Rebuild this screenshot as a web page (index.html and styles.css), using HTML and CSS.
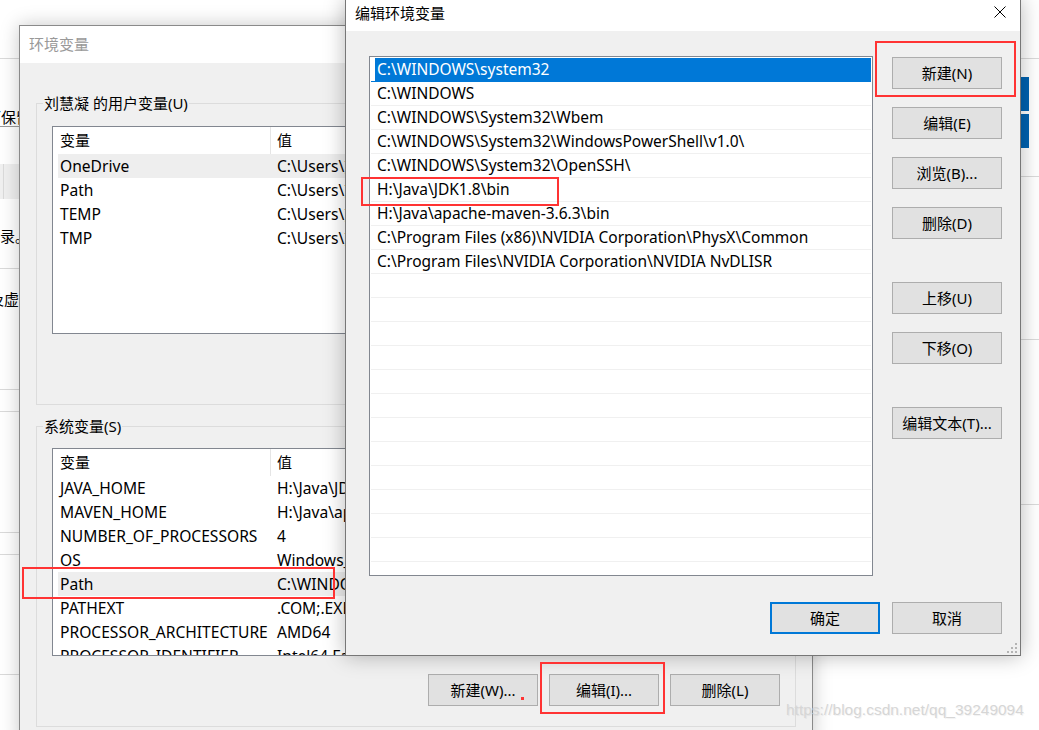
FILE: index.html
```html
<!DOCTYPE html>
<html lang="zh-CN">
<head>
<meta charset="utf-8">
<title>编辑环境变量</title>
<link rel="stylesheet" href="styles.css">
</head>
<body>
<div class="desktop">

  <!-- background window (system properties) -->
  <div class="bg">
    <div class="bg-head"></div>
    <div class="bg-main">
      <div class="bg-left">
        <div class="bl-keep"><span>可保留设置</span></div>
        <div class="bl-tab"><span></span></div>
        <p class="bl-text bl-dir">目录。</p>
        <div class="bl-rule r1"></div>
        <p class="bl-text bl-virt">及虚拟</p>
        <div class="bl-rule r2"></div>
        <div class="bl-rule r3"></div>
        <div class="bl-rule r4"></div>
        <div class="bl-rule r3"></div>
        <div class="bl-rule r5"></div>
      </div>
      <div class="bg-right">
        <div class="bg-btn"></div>
        <div class="bg-btn b2"></div>
        <div class="br-rule q1"></div>
        <div class="br-rule q2"></div>
        <div class="br-rule q3"></div>
      </div>
    </div>
  </div>

  <!-- 环境变量 window -->
  <section class="win env">
    <header class="env-title">环境变量</header>
    <div class="env-body">
      <fieldset class="group g1">
        <legend>刘慧凝 的用户变量(U)</legend>
        <div class="lv">
          <div class="lv-head"><span>变量</span><span>值</span></div>
          <div class="lv-row hl"><span>OneDrive</span><span>C:\Users\刘慧凝\OneDrive</span></div>
          <div class="lv-row"><span>Path</span><span>C:\Users\刘慧凝\AppData\Local\Microsoft\WindowsApps</span></div>
          <div class="lv-row"><span>TEMP</span><span>C:\Users\刘慧凝\AppData\Local\Temp</span></div>
          <div class="lv-row"><span>TMP</span><span>C:\Users\刘慧凝\AppData\Local\Temp</span></div>
        </div>
      </fieldset>
      <fieldset class="group g2">
        <legend>系统变量(S)</legend>
        <div class="lv">
          <div class="lv-head"><span>变量</span><span>值</span></div>
          <div class="lv-row"><span>JAVA_HOME</span><span>H:\Java\JDK1.8</span></div>
          <div class="lv-row"><span>MAVEN_HOME</span><span>H:\Java\apache-maven-3.6.3</span></div>
          <div class="lv-row"><span>NUMBER_OF_PROCESSORS</span><span>4</span></div>
          <div class="lv-row"><span>OS</span><span>Windows_NT</span></div>
          <div class="lv-row hl"><span>Path</span><span>C:\WINDOWS\system32;C:\WINDOWS</span></div>
          <div class="lv-row"><span>PATHEXT</span><span>.COM;.EXE;.BAT;.CMD;.VBS</span></div>
          <div class="lv-row"><span>PROCESSOR_ARCHITECTURE</span><span>AMD64</span></div>
          <div class="lv-row"><span>PROCESSOR_IDENTIFIER</span><span>Intel64 Family 6 Model 142</span></div>
        </div>
        <div class="env-actions">
          <button class="btn">新建(W)...</button>
          <button class="btn">编辑(I)...</button>
          <button class="btn">删除(L)</button>
        </div>
      </fieldset>
    </div>
  </section>

  <!-- 编辑环境变量 dialog -->
  <section class="win dlg">
    <header class="dlg-title">
      <span>编辑环境变量</span>
      <span class="dlg-close">
        <svg width="12" height="12" viewBox="0 0 12 12"><path d="M0.5 0.5 L11.5 11.5 M11.5 0.5 L0.5 11.5" stroke="#000" stroke-width="1" fill="none"/></svg>
      </span>
    </header>
    <div class="dlg-body">
      <ul class="listbox">
        <li class="sel">C:\WINDOWS\system32</li>
        <li>C:\WINDOWS</li>
        <li>C:\WINDOWS\System32\Wbem</li>
        <li>C:\WINDOWS\System32\WindowsPowerShell\v1.0\</li>
        <li>C:\WINDOWS\System32\OpenSSH\</li>
        <li>H:\Java\JDK1.8\bin</li>
        <li>H:\Java\apache-maven-3.6.3\bin</li>
        <li>C:\Program Files (x86)\NVIDIA Corporation\PhysX\Common</li>
        <li>C:\Program Files\NVIDIA Corporation\NVIDIA NvDLISR</li>
        <li></li><li></li><li></li><li></li><li></li><li></li><li></li>
        <li></li><li></li><li></li><li></li><li></li><li></li>
      </ul>
      <div class="side">
        <button class="btn">新建(N)</button>
        <button class="btn">编辑(E)</button>
        <button class="btn">浏览(B)...</button>
        <button class="btn">删除(D)</button>
        <button class="btn far">上移(U)</button>
        <button class="btn">下移(O)</button>
        <button class="btn far">编辑文本(T)...</button>
      </div>
      <div class="dlg-foot">
        <button class="btn default">确定</button>
        <button class="btn">取消</button>
      </div>
    </div>
    <svg class="grip" width="12" height="12" viewBox="0 0 12 12">
      <rect x="9" y="1" width="2" height="2"/><rect x="5" y="5" width="2" height="2"/><rect x="9" y="5" width="2" height="2"/>
      <rect x="1" y="9" width="2" height="2"/><rect x="5" y="9" width="2" height="2"/><rect x="9" y="9" width="2" height="2"/>
    </svg>
  </section>

  <!-- red annotations -->
  <div class="mark m-new"></div>
  <div class="mark m-jdk"></div>
  <div class="mark m-path"></div>
  <div class="mark m-edit"></div>
  <div class="dot"></div>

  <div class="watermark">https://blog.csdn.net/qq_39249094</div>
</div>
</body>
</html>
```
FILE: styles.css
```css
* { box-sizing: border-box; }
html, body { margin: 0; padding: 0; }
body {
  font-family: "Noto Sans", "Noto Sans CJK SC", sans-serif;
  font-size: 15px;
  color: #000;
  background: #fff;
}
.desktop {
  position: relative;
  width: 1039px;
  height: 730px;
  overflow: hidden;
  background: #fff;
}

/* ---------- background window ---------- */
.bg { display: flex; flex-direction: column; height: 100%; }
.bg-head { height: 59px; border-bottom: 1px solid #dadada; flex: none; }
.bg-main { display: flex; flex: 1; }
.bg-left { width: 346px; display: flex; flex-direction: column; }
.bl-keep {
  height: 68px; display: flex; align-items: flex-end;
  border-bottom: 1px solid #9a9a9a; line-height: 17px; overflow: hidden;
}
.bl-keep span { margin-left: -14px; white-space: nowrap; }
.bl-tab { height: 35px; margin-top: 37px; background: #f0f0f0; }
.bl-tab span { display: block; height: 100%; margin-left: 3px; border-left: 1px solid #dadada; }
.bl-text { margin: 0; line-height: 20px; white-space: nowrap; }
.bl-dir { margin-top: 27px; margin-left: -15px; }
.bl-virt { margin-top: 20px; margin-left: -11px; }
.bl-rule { border-top: 1px solid #dadada; }
.bl-rule.r1 { margin-top: 22px; }
.bl-rule.r2 { margin-top: 80px; }
.bl-rule.r3 { margin-top: 21px; }
.bl-rule.r4 { margin-top: 120px; }
.bl-rule.r5 { margin-top: 119px; }
.bg-right { flex: 1; display: flex; flex-direction: column; align-items: flex-end; padding-top: 18px; }
.bg-btn { width: 90px; height: 34px; margin-right: 10px; background: #0063b1; }
.bg-btn.b2 { margin-top: 3px; }
.br-rule { align-self: stretch; border-top: 1px solid #dadada; }
.br-rule.q1 { margin-top: 28px; }
.br-rule.q2 { margin-top: 162px; }
.br-rule.q3 { margin-top: 164px; }

/* ---------- generic windows ---------- */
.win { position: absolute; background: #f0f0f0; }

.btn {
  font: inherit;
  color: #000;
  width: 110px;
  height: 32px;
  padding: 0;
  background: #e1e1e1;
  border: 1px solid #adadad;
  border-radius: 0;
  line-height: 28px;
}
.btn.default { border: 2px solid #0078d7; }

/* ---------- 环境变量 ---------- */
.env {
  left: 19px; top: 25px;
  width: 794px; height: 720px;
  border: 1px solid #8a8a8a;
  box-shadow: 0 0 18px rgba(0,0,0,0.22);
}
.env-title {
  height: 37px;
  background: #fff;
  color: #999;
  padding-left: 9px;
  line-height: 37px;
}
.env-body { padding: 30px 16px 0; }
.group {
  margin: 0;
  min-width: 0;
  border: 1px solid #dcdcdc;
  padding: 13px 15px 70px;
}
.group legend {
  margin-left: -9px;
  padding: 0 1px;
  line-height: 20px;
}
.group.g2 { margin-top: 11px; padding: 12px 15px 20px; }
.lv {
  height: 208px;
  background: #fff;
  border: 1px solid #828790;
  overflow: hidden;
}
.lv-head, .lv-row {
  display: grid;
  grid-template-columns: 213px 1fr;
  margin-left: 5px;
  white-space: nowrap;
}
.lv-head { height: 27px; line-height: 27px; }
.lv-head span:first-child { border-right: 1px solid #e5e5e5; padding-left: 2px; }
.lv-head span:last-child { padding-left: 6px; }
.lv-row { height: 24px; line-height: 24px; font-size: 15.6px; }
.lv-row span { overflow: hidden; }
.lv-row span:first-child { padding-left: 2px; }
.lv-row span:last-child { padding-left: 6px; }
.lv-row.hl { background: #eeeeee; }
.env-actions {
  display: flex;
  justify-content: flex-end;
  gap: 11px;
  margin-top: 18px;
}

/* ---------- 编辑环境变量 ---------- */
.dlg {
  left: 345px; top: -1px;
  width: 676px; height: 657px;
  border: 1px solid #777;
  box-shadow: 0 0 20px rgba(0,0,0,0.28);
}
.dlg-title {
  height: 31px;
  background: #fff;
  display: flex;
  align-items: center;
  justify-content: space-between;
  padding: 0 0 7px 9px;
}
.dlg-close {
  width: 40px; height: 24px;
  display: flex; align-items: center; justify-content: center;
}
.dlg-body {
  display: grid;
  grid-template-columns: 504px 110px;
  grid-template-rows: 520px 32px;
  column-gap: 19px;
  row-gap: 26px;
  padding: 25px 18px 21px 23px;
}
.listbox {
  margin: 0;
  padding: 1px 0 0 1px;
  list-style: none;
  background: #fff;
  border: 1px solid #828790;
  overflow: hidden;
  font-size: 15.5px;
}
.listbox li {
  height: 24px;
  line-height: 23px;
  border-bottom: 1px solid #f0f0f0;
  padding-left: 6px;
  margin-right: 1px;
  white-space: nowrap;
}
.listbox li.sel {
  background: #0078d7;
  border-bottom-color: #0078d7;
  box-shadow: inset 4px 0 0 #fff;
  color: #fff;
}
.side { display: flex; flex-direction: column; gap: 18px; padding-top: 1px; }
.side .far { margin-top: 25px; }
.dlg-foot {
  grid-column: 1 / -1;
  display: flex;
  justify-content: flex-end;
  gap: 12px;
}
.grip { position: absolute; right: 2px; bottom: 1px; fill: #b4b4b4; }

/* ---------- annotations ---------- */
.mark { position: absolute; border: 2px solid #f33; }
.m-new { left: 875px; top: 41px; width: 141px; height: 56px; }
.m-jdk { left: 361px; top: 177px; width: 198px; height: 29px; }
.m-path { left: 22px; top: 567px; width: 313px; height: 32px; }
.m-edit { left: 540px; top: 662px; width: 125px; height: 52px; }
.dot { position: absolute; left: 521px; top: 697px; width: 3px; height: 3px; background: #f33; }

.watermark {
  position: absolute;
  left: 786px; top: 701px;
  font-family: "Liberation Sans", sans-serif;
  font-size: 15.5px;
  color: #d6d6d6;
  text-shadow: 1px 1px 1px rgba(0,0,0,0.06);
  white-space: nowrap;
}
```
